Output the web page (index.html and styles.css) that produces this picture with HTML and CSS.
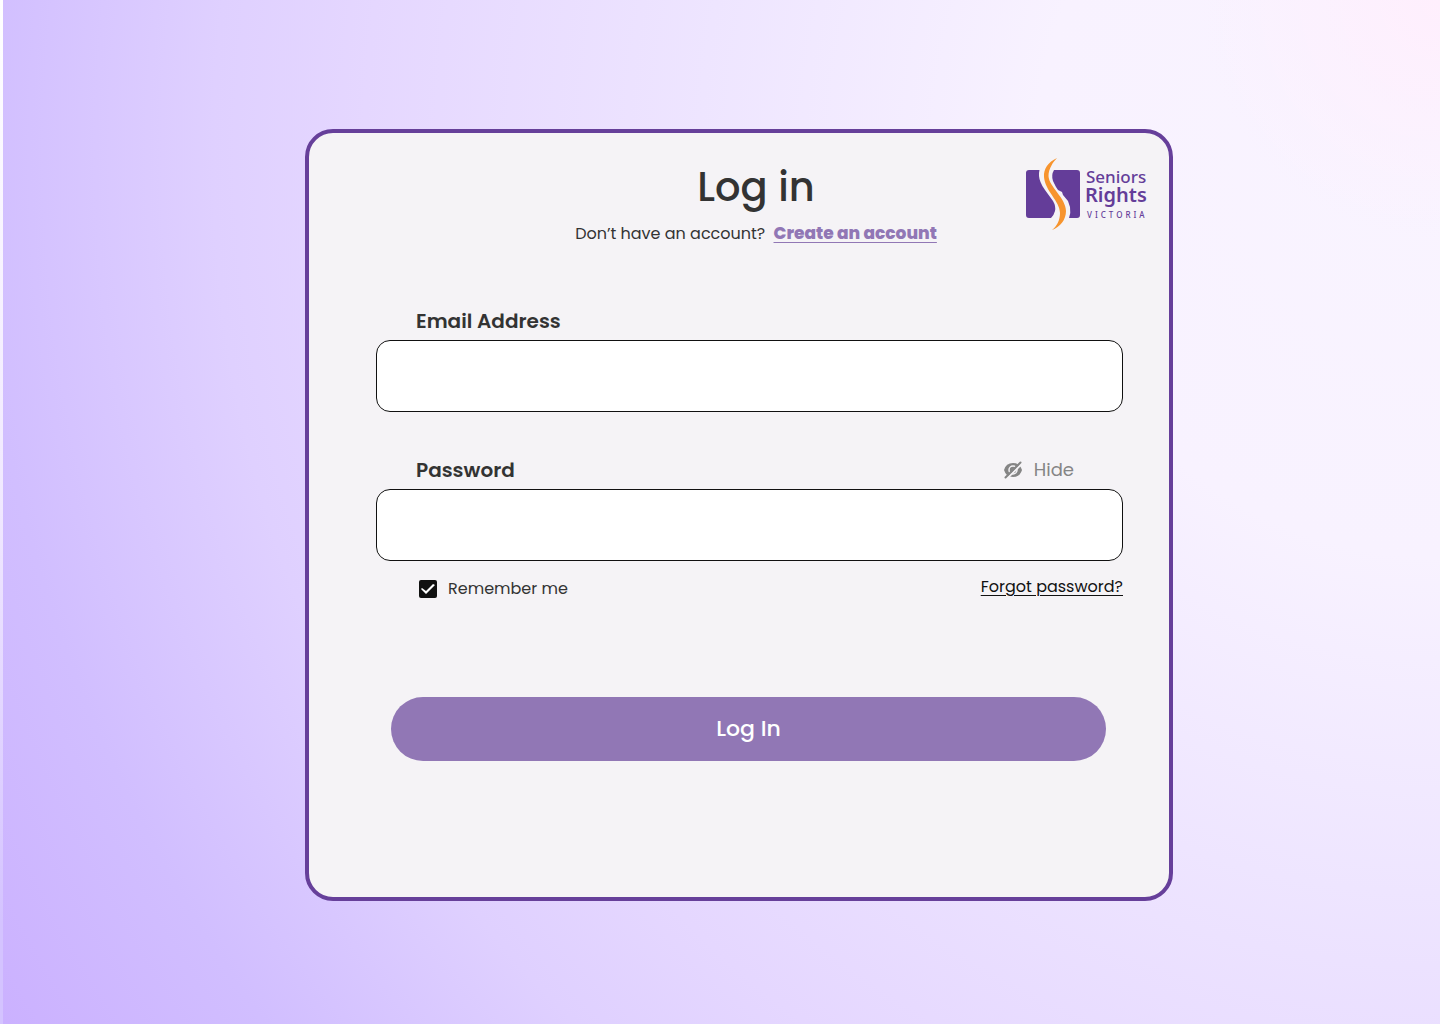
FILE: index.html
```html
<!DOCTYPE html>
<html lang="en">
<head>
<meta charset="utf-8">
<meta name="viewport" content="width=device-width, initial-scale=1">
<title>Log in</title>
<link rel="stylesheet" href="styles.css">
</head>
<body>
<main class="page">
  <section class="card">
    <header class="card-header">
      <div class="intro">
        <h1 class="title">Log in</h1>
        <p class="signup">Don’t have an account? <a class="signup-link" href="#">Create an account</a></p>
      </div>
      <svg class="logo" viewBox="0 0 124 76" role="img" aria-label="Seniors Rights Victoria">
        <path fill="#643d99" d="M4 13H14.500Q13 19 15.500 25Q17 29 20 33L28 44Q31 49 30 54Q29 58 26 61H4Q1 61 1 58V16Q1 13 4 13Z"/>
        <path fill="#643d99" d="M29 13H52Q55 13 55 16V58Q55 61 52 61H44Q46 56 45 50L43 44L38 38L37 35L33 33L31 30L28 24Q26 18 29 13Z"/>
        <path fill="#f7942e" d="M32 1C23 5 18.500 12 19 20C20 34 35 44 35 56C35 63 32 69 27 73C35 70 41 63 41 54C41 41 24 30 23.500 19C23.500 12 28 5 32 1Z"/>
        <g class="logo-text">
          <text x="61" y="26" font-size="17">Seniors</text>
          <text class="logo-main" x="60" y="45" font-size="20">Rights</text>
          <text class="logo-place" x="62" y="61" font-size="8">VICTORIA</text>
        </g>
      </svg>
    </header>

    <form class="form">
      <div class="field">
        <div class="field-head"><label class="label" for="email">Email Address</label></div>
        <input class="input" id="email" type="email">
      </div>
      <div class="field">
        <div class="field-head">
          <label class="label" for="password">Password</label>
          <button class="toggle" type="button">
            <svg class="eye" viewBox="0 0 20 18" aria-hidden="true">
              <path fill="#858585" d="M1 9Q3 2 10 2Q17 2 19 9Q17 16 10 16Q3 16 1 9Z"/>
              <circle cx="10" cy="9" r="4" fill="none" stroke="#f5f3f6" stroke-width="1.500"/>
              <path d="M4 17.500L18.500 3" stroke="#f5f3f6" stroke-width="2"/>
              <path d="M2.500 16.500L17.500 1.500" stroke="#858585" stroke-width="2" stroke-linecap="round"/>
            </svg>
            Hide
          </button>
        </div>
        <input class="input" id="password" type="password">
      </div>
      <div class="options">
        <label class="remember"><input class="check" type="checkbox" checked>Remember me</label>
        <a class="forgot" href="#">Forgot password?</a>
      </div>
      <button class="submit" type="submit">Log In</button>
    </form>
  </section>
</main>
</body>
</html>
```

FILE: styles.css
```css
* { box-sizing: border-box; }

body {
  margin: 0;
  background: linear-gradient(#fff, #f0e8ff 50%, #d4c3ff 90%);
  color: #333;
  font-family: Poppins, Inter, "Open Sans", sans-serif;
  font-size: 16px;
  line-height: 24px;
}

button, input { font: inherit; }

.page {
  display: flex;
  justify-content: center;
  align-items: flex-start;
  min-height: 100vh;
  margin-left: 3px;
  padding: 129px 0 123px 35px;
  background:
    radial-gradient(circle at 100% 0, #ffeffd 0, #ffeffd00 240px),
    radial-gradient(circle at 100% 15%, #f9f4ff 0, #f8f2ff 24%, #eee5ff 44%, #e5d7ff 64%, #dfd0ff 73%, #d1beff 87%, #cbb1ff 100%);
}

.card {
  width: 100%;
  max-width: 868px;
  padding-bottom: 136px;
  border: 4px solid #663f9a;
  border-radius: 28px;
  background: #f5f3f6;
}

.card-header {
  display: flex;
  align-items: flex-start;
  padding: 24px 20px 0 178px;
}

.intro {
  flex: 1;
  text-align: center;
}

.title {
  margin: 0;
  font-size: 40px;
  font-weight: 500;
  line-height: 60px;
}

.signup {
  margin: 4px 0 0;
  font-size: 16px;
}

.signup-link {
  margin-left: 4px;
  color: #9177b5;
  font-size: 17px;
  font-weight: 800;
  text-underline-offset: 3px;
  text-decoration-thickness: 1px;
}

.logo {
  flex: none;
  width: 124px;
  height: 76px;
}

.logo-text {
  fill: #643d99;
  font-family: "Noto Sans", "Open Sans", sans-serif;
  font-weight: 500;
}

.logo-main { font-weight: 600; }

.logo-place { letter-spacing: 3px; }

.form {
  display: flex;
  flex-direction: column;
  padding: 56px 46px 0 67px;
}

.field + .field { margin-top: 39px; }

.field-head {
  display: flex;
  justify-content: space-between;
  align-items: center;
  height: 38px;
  padding: 0 49px 0 40px;
}

.label {
  font-size: 20px;
  font-weight: 600;
}

.toggle {
  display: flex;
  align-items: center;
  gap: 11px;
  padding: 0;
  border: 0;
  background: none;
  color: #858585;
  font-size: 18px;
  cursor: pointer;
}

.eye {
  width: 20px;
  height: 18px;
}

.input {
  display: block;
  width: 100%;
  height: 72px;
  padding: 0 40px;
  border: 1px solid #111;
  border-radius: 14px;
  background: #fff;
}

.options {
  display: flex;
  justify-content: space-between;
  padding: 14px 0 0 43px;
}

.remember {
  display: flex;
  align-items: center;
  gap: 11px;
  padding-top: 2px;
}

.check {
  display: grid;
  place-items: center;
  appearance: none;
  width: 18px;
  height: 18px;
  margin: 0;
  border-radius: 2px;
  background: #111;
}

.check:checked::after {
  content: "";
  width: 14px;
  height: 10px;
  background: #fff;
  clip-path: polygon(0 5px, 1px 4px, 5px 7px, 12px 0, 14px 1px, 5px 10px);
}

.forgot {
  color: #111;
  text-underline-offset: 3px;
  text-decoration-thickness: 1px;
}

.submit {
  height: 64px;
  margin: 96px 17px 0 15px;
  border: 0;
  border-radius: 32px;
  background: #9177b5;
  color: #fff;
  font-size: 22px;
  font-weight: 500;
  cursor: pointer;
}
```
